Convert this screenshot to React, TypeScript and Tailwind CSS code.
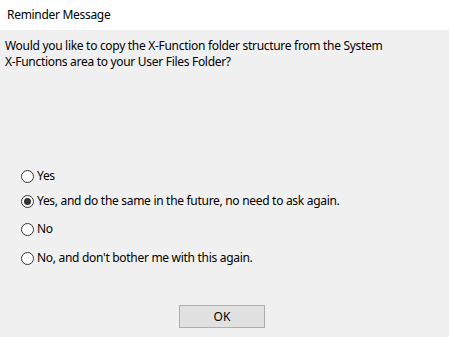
import React from "react";

function Radio({ checked, label, className }: { checked?: boolean; label: string; className?: string }) {
  return (
    <div className={"flex items-center h-[14px] " + (className ?? "")}>
      <div className="w-[13px] h-[13px] rounded-full border border-[#333333] bg-white flex items-center justify-center ml-[21px]">
        {checked && <div className="w-[7px] h-[7px] rounded-full bg-[#333333]" />}
      </div>
      <span className="ml-[3px] text-[12px] tracking-[-0.3px] text-black leading-none">{label}</span>
    </div>
  );
}

export default function App() {
  return (
    <div
      className="w-[449px] h-[337px] flex flex-col bg-[#f0f0f0]"
      style={{ fontFamily: '"Noto Sans", "Open Sans", sans-serif' }}
    >
      <div className="h-[30px] bg-white flex items-center pl-[7px] text-[12px] tracking-[-0.3px] text-black">
        Reminder Message
      </div>
      <div className="px-[5px] pt-[8px] text-[12px] tracking-[-0.3px] leading-[16px] text-black">
        Would you like to copy the X-Function folder structure from the System
        <br />
        X-Functions area to your User Files Folder?
      </div>
      <div className="flex flex-col mt-[99px]">
        <Radio label="Yes" />
        <Radio checked label="Yes, and do the same in the future, no need to ask again." className="mt-[11px]" />
        <Radio label="No" className="mt-[14px]" />
        <Radio label="No, and don't bother me with this again." className="mt-[15px]" />
      </div>
      <div className="flex mt-[40px]">
        <button className="w-[86px] h-[23px] bg-[#e1e1e1] border border-[#adadad] text-[12px] text-black ml-[179px]">
          OK
        </button>
      </div>
    </div>
  );
}
